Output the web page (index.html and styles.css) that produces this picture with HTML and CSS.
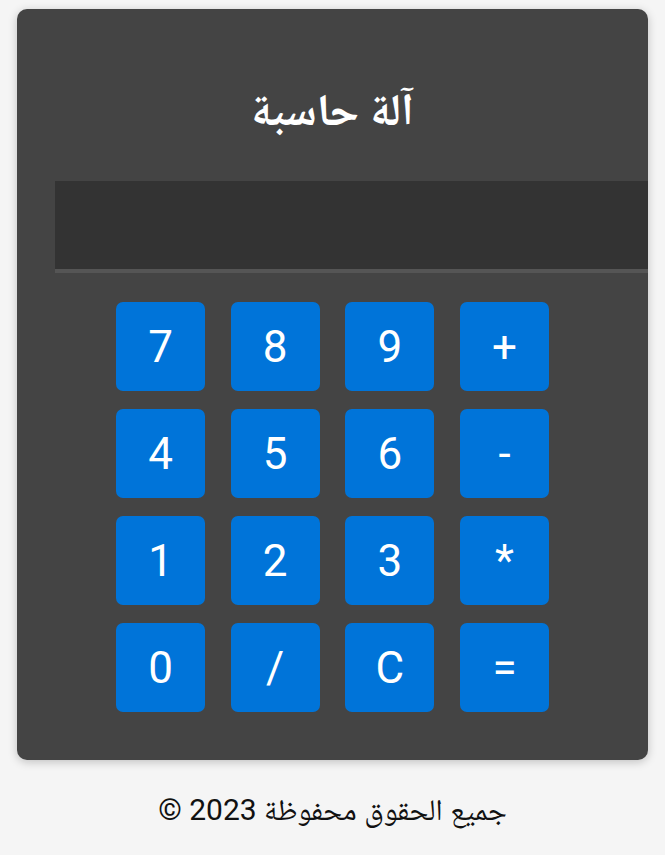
FILE: index.html
```html
<!DOCTYPE html>
<html lang="ar">
<head>
<meta charset="utf-8">
<title>آلة حاسبة</title>
<link rel="stylesheet" href="styles.css">
</head>
<body>
<div class="page">
  <div class="calc">
    <h1 class="title" dir="rtl">آلة حاسبة</h1>
    <div class="display"></div>
    <div class="keys">
      <button class="key">7</button>
      <button class="key">8</button>
      <button class="key">9</button>
      <button class="key">+</button>
      <button class="key">4</button>
      <button class="key">5</button>
      <button class="key">6</button>
      <button class="key">-</button>
      <button class="key">1</button>
      <button class="key">2</button>
      <button class="key">3</button>
      <button class="key">*</button>
      <button class="key">0</button>
      <button class="key">/</button>
      <button class="key">C</button>
      <button class="key">=</button>
    </div>
  </div>
  <footer class="footer" dir="rtl">جميع الحقوق محفوظة 2023 ©</footer>
</div>
</body>
</html>
```
FILE: styles.css
```css
html, body {
  margin: 0;
  padding: 0;
  background: #f5f5f5;
  font-family: Roboto, "Noto Naskh Arabic", "Noto Naskh Arabic UI", "DejaVu Sans", sans-serif;
}

.page {
  padding: 9px 17px 0 17px;
}

.calc {
  width: 631px;
  box-sizing: border-box;
  background: #444444;
  border-radius: 10px;
  box-shadow: 0 2px 10px rgba(0, 0, 0, 0.22);
  padding: 0 0 48px 0;
  overflow: hidden;
}

.title {
  margin: 0;
  padding-top: 70px;
  height: 62px;
  line-height: 62px;
  margin-bottom: 40px;
  text-align: center;
  color: #ffffff;
  font-size: 45px;
  font-weight: bold;
}

.display {
  margin-left: 38px;
  width: 593px;
  height: 88px;
  background: #333333;
  border-bottom: 4px solid #555555;
}

.keys {
  margin-top: 29px;
  display: grid;
  grid-template-columns: repeat(4, 89px);
  grid-auto-rows: 89px;
  column-gap: 25.67px;
  row-gap: 18px;
  justify-content: center;
}

.key {
  border: none;
  margin: 0;
  padding: 0;
  border-radius: 7px;
  background: #0074d9;
  color: #ffffff;
  font-family: Roboto, sans-serif;
  font-size: 44px;
  font-weight: 400;
}

.footer {
  margin-top: 30px;
  text-align: center;
  font-size: 30px;
  color: #111111;
  line-height: 40px;
}
```
